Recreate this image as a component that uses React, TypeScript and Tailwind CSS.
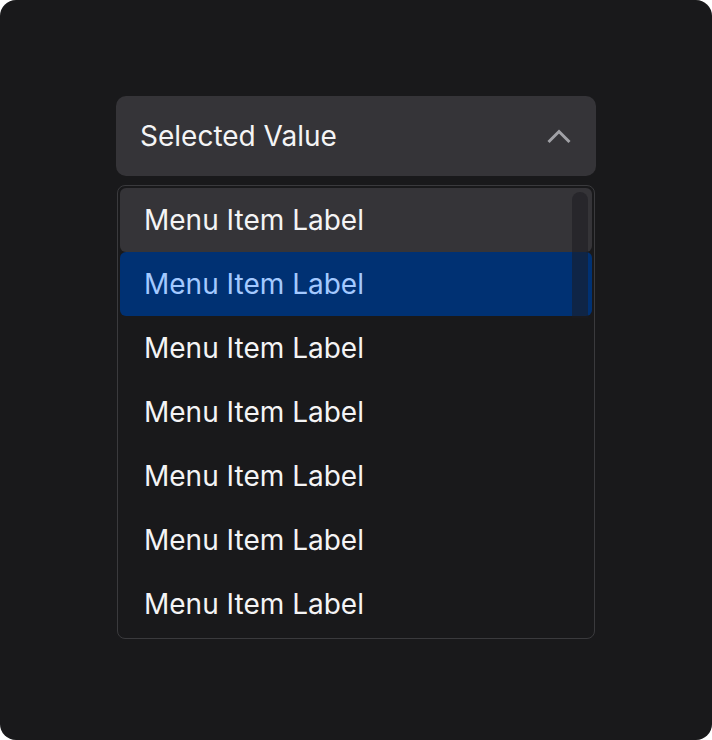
const items = Array.from({ length: 7 }, (_, i) => i)

export default function App() {
  return (
    <div className="w-[712px] h-[740px] bg-white">
      <div className="w-full h-full rounded-[16px] bg-[#19191b] pt-[96px] px-[116px] font-['Inter',sans-serif]">
        <button className="w-full h-[80px] rounded-[10px] bg-[#353438] flex items-center justify-between pl-[24px] pr-[24px] text-left">
          <span className="text-[28px] text-[#f4f4f5]">Selected Value</span>
          <svg width="26" height="18" viewBox="0 0 26 18" fill="none">
            <path d="M2.5 15 L13 4.5 L23.5 15" stroke="#a1a1a6" strokeWidth="3" />
          </svg>
        </button>

        <div className="relative mt-[9px] mx-[1px] border-[1.5px] border-[#3a3a3d] rounded-[8px] p-[2px]">
          {items.map((i) => (
            <div
              key={i}
              className={
                i === 0
                  ? "h-[64px] flex items-center pl-[24px] rounded-[6px] bg-[#353438] text-[#f4f4f5] text-[28px]"
                  : i === 1
                  ? "h-[64px] flex items-center pl-[24px] rounded-[6px] bg-[#003173] text-[#a3c9ff] text-[28px]"
                  : "h-[64px] flex items-center pl-[24px] rounded-[6px] text-[#f4f4f5] text-[28px]"
              }
            >
              Menu Item Label
            </div>
          ))}
          {/* scrollbar thumb */}
          <div className="absolute top-[6px] right-[6px] w-[16px] h-[126px] rounded-t-[8px] bg-[#1c1c20]/55" />
        </div>
      </div>
    </div>
  )
}
